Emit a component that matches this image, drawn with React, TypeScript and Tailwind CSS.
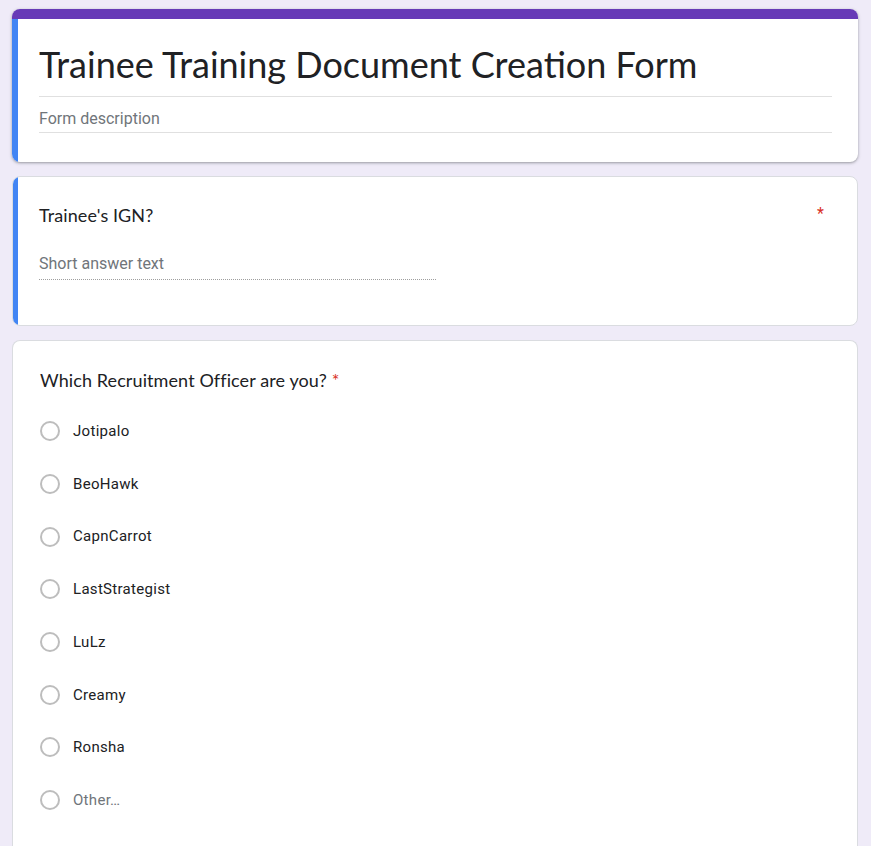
const options = [
  "Jotipalo",
  "BeoHawk",
  "CapnCarrot",
  "LastStrategist",
  "LuLz",
  "Creamy",
  "Ronsha",
];

function Radio() {
  return (
    <span className="w-[20px] h-[20px] rounded-full border-2 border-[#bdbdbd] shrink-0" />
  );
}

export default function App() {
  return (
    <div className="min-h-[846px] bg-[#efebf8] pt-[9px] pl-[12px] pr-[13px] overflow-hidden font-['Roboto',sans-serif]">
      <div className="flex flex-col gap-[14px]">
        {/* header card */}
        <div className="bg-white rounded-lg overflow-hidden shadow-[0_1px_2px_rgba(60,64,67,0.3),0_1px_3px_1px_rgba(60,64,67,0.15)]">
          <div className="h-[10px] bg-[#673ab7]" />
          <div className="flex">
            <div className="w-[6px] bg-[#4285f4]" />
            <div className="flex-1 pl-[21px] pr-[26px] pt-[21px] pb-[29px]">
              <div className="font-['Lato',sans-serif] text-[36px] leading-[48px] text-[#202124] pb-[8px] border-b border-[#e0e0e0]">
                Trainee Training Document Creation Form
              </div>
              <div className="text-[16px] text-[#70757a] pt-[12px] pb-[3px] border-b border-[#e0e0e0] leading-[20px]">
                Form description
              </div>
            </div>
          </div>
        </div>

        {/* short answer card */}
        <div className="bg-white rounded-lg overflow-hidden border border-[#dadce0] flex h-[150px]">
          <div className="w-[6px] bg-[#4285f4] -my-px -ml-px" />
          <div className="flex-1 pl-[21px] pr-[33px] pt-[26px]">
            <div className="flex justify-between">
              <span className="font-['Lato',sans-serif] text-[18px] tracking-[0.1px] leading-[24px] text-[#202124]">
                Trainee's IGN?
              </span>
              <span className="text-[#d93025] text-[16px] leading-[24px] -mt-px">*</span>
            </div>
            <div className="w-[397px] mt-[27px] text-[16px] text-[#70757a] leading-[20px] pb-[5px] border-b border-dotted border-[#9e9e9e]">
              Short answer text
            </div>
          </div>
        </div>

        {/* multiple choice card */}
        <div className="bg-white rounded-t-lg border border-[#dadce0] border-b-0 pl-[27px] pt-[27px] pb-[40px]">
          <div className="font-['Lato',sans-serif] text-[18px] tracking-[0.1px] leading-[24px] text-[#202124]">
            Which Recruitment Officer are you?{" "}
            <span className="text-[#d93025]">*</span>
          </div>
          <div className="mt-[13px] flex flex-col">
            {options.map((o) => (
              <div key={o} className="flex items-center gap-[13px] h-[52.7px]">
                <Radio />
                <span className="text-[15px] text-[#202124] tracking-[0.3px]">{o}</span>
              </div>
            ))}
            <div className="flex items-center gap-[13px] h-[52.7px]">
              <Radio />
              <span className="text-[15px] text-[#70757a] tracking-[0.3px]">Other…</span>
            </div>
          </div>
        </div>
      </div>
    </div>
  );
}
